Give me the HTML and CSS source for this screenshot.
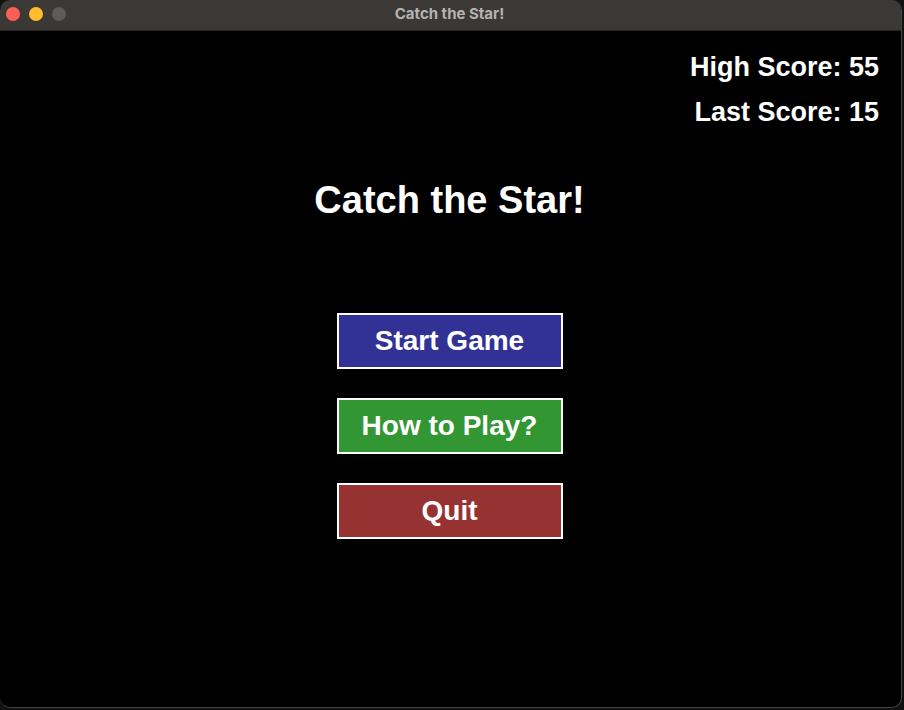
FILE: index.html
```html
<!DOCTYPE html>
<html lang="en">
<head>
<meta charset="utf-8">
<title>Catch the Star!</title>
<link rel="stylesheet" href="styles.css">
</head>
<body>
<div class="window">
  <header class="titlebar">
    <div class="controls">
      <button class="control close" aria-label="Close"></button>
      <button class="control minimize" aria-label="Minimize"></button>
      <button class="control zoom" aria-label="Zoom" disabled></button>
    </div>
    <span class="window-title">Catch the Star!</span>
  </header>
  <main class="game">
    <div class="scores">
      <p class="score">High Score: 55</p>
      <p class="score">Last Score: 15</p>
    </div>
    <h1 class="title">Catch the Star!</h1>
    <nav class="menu">
      <button class="menu-button start">Start Game</button>
      <button class="menu-button help">How to Play?</button>
      <button class="menu-button quit">Quit</button>
    </nav>
  </main>
</div>
</body>
</html>
```
FILE: styles.css
```css
* {
  box-sizing: border-box;
  margin: 0;
}

body {
  min-height: 100vh;
  display: flex;
  padding: 0 2px 2px 0;
  background: #111;
  font-family: "Liberation Sans", Arial, sans-serif;
}

.window {
  flex: 1;
  display: flex;
  flex-direction: column;
  overflow: hidden;
  border: solid #444;
  border-width: 0 1px 1px 0;
  border-radius: 10px;
  background: #000;
}

.titlebar {
  display: grid;
  grid-template-columns: 1fr auto 1fr;
  align-items: center;
  height: 31px;
  padding: 0 8px 2px 6px;
  background: #3a3936;
  border-bottom: 1px solid #232321;
}

.controls {
  display: flex;
  gap: 9px;
}

.control {
  width: 14px;
  height: 14px;
  padding: 0;
  border: 0;
  border-radius: 50%;
}

.close { background: #ff5f57; }
.minimize { background: #febc2e; }
.zoom { background: #5d5c5a; }

.window-title {
  color: #b4b3b2;
  font: 700 15px/20px "Inter", sans-serif;
}

.game {
  flex: 1;
  display: flex;
  flex-direction: column;
  align-items: center;
  padding: 20px 22px 20px 20px;
  color: #fff;
}

.scores {
  align-self: flex-end;
  display: grid;
  gap: 13px;
  text-align: right;
}

.score {
  font-size: 27px;
  font-weight: 700;
  line-height: 32px;
}

.title {
  margin-top: 48px;
  font-size: 38px;
  line-height: 48px;
}

.menu {
  display: grid;
  gap: 29px;
  width: 226px;
  margin-top: 89px;
}

.menu-button {
  height: 56px;
  padding: 0;
  border: 2px solid #fff;
  color: #fff;
  font: 700 28px/32px "Liberation Sans", Arial, sans-serif;
}

.start { background: #323296; }
.help { background: #329632; }
.quit { background: #963232; }
```
